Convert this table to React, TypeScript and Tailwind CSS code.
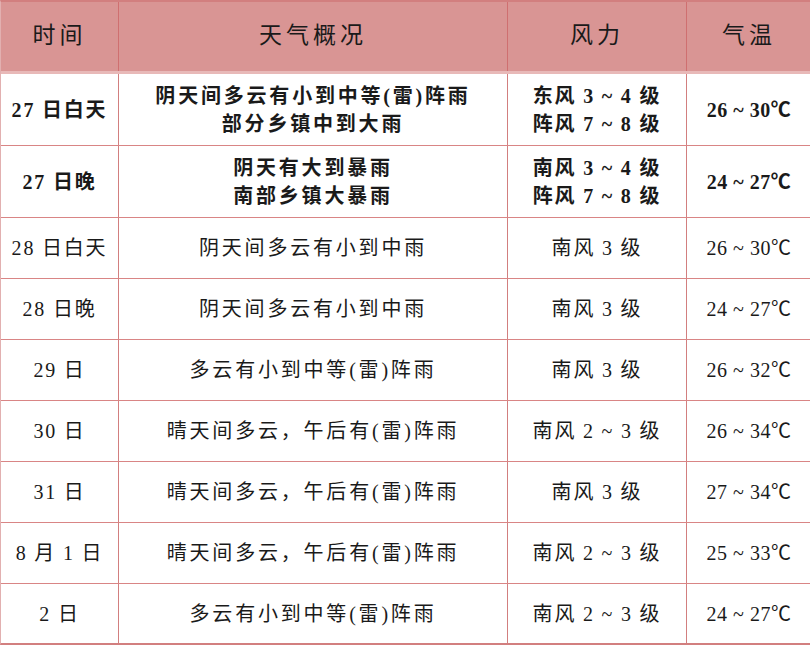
import React from "react";

// One forecast row in the weather table
interface ForecastRow {
  time: string;
  sky: string[];
  wind: string[];
  temp: string;
  bold?: boolean;
  tall?: boolean;
}

const rows: ForecastRow[] = [
  { time: "27 日白天", sky: ["阴天间多云有小到中等(雷)阵雨", "部分乡镇中到大雨"], wind: ["东风 3 ~ 4 级", "阵风 7 ~ 8 级"], temp: "26 ~ 30℃", bold: true, tall: true },
  { time: "27 日晚", sky: ["阴天有大到暴雨", "南部乡镇大暴雨"], wind: ["南风 3 ~ 4 级", "阵风 7 ~ 8 级"], temp: "24 ~ 27℃", bold: true, tall: true },
  { time: "28 日白天", sky: ["阴天间多云有小到中雨"], wind: ["南风 3 级"], temp: "26 ~ 30℃" },
  { time: "28 日晚", sky: ["阴天间多云有小到中雨"], wind: ["南风 3 级"], temp: "24 ~ 27℃" },
  { time: "29 日", sky: ["多云有小到中等(雷)阵雨"], wind: ["南风 3 级"], temp: "26 ~ 32℃" },
  { time: "30 日", sky: ["晴天间多云，午后有(雷)阵雨"], wind: ["南风 2 ~ 3 级"], temp: "26 ~ 34℃" },
  { time: "31 日", sky: ["晴天间多云，午后有(雷)阵雨"], wind: ["南风 3 级"], temp: "27 ~ 34℃" },
  { time: "8 月 1 日", sky: ["晴天间多云，午后有(雷)阵雨"], wind: ["南风 2 ~ 3 级"], temp: "25 ~ 33℃" },
  { time: "2 日", sky: ["多云有小到中等(雷)阵雨"], wind: ["南风 2 ~ 3 级"], temp: "24 ~ 27℃" },
];

const font = { fontFamily: '"Liberation Serif", "Noto Sans CJK SC", serif' };

export default function App() {
  return (
    <div className="w-[810px] h-[645px] bg-white overflow-hidden text-[#1a1a1a]" style={font}>
      <div className="border-l border-t-2 border-b-2 border-[#d27f7f] border-l-[#e2b0b0]">
        {/* Header */}
        <div className="grid grid-cols-[118px_389px_179px_124px] h-[72px] bg-[#d99594] border-b-[3px] border-[#e8b9b8] text-[23px] tracking-[4px]">
          <div className="flex items-center justify-center border-r border-[#cf6f70]">时间</div>
          <div className="flex items-center justify-center border-r border-[#cf6f70]">天气概况</div>
          <div className="flex items-center justify-center border-r border-[#cf6f70]">风力</div>
          <div className="flex items-center justify-center">气温</div>
        </div>

        {rows.map((row, index) => {
          const last = index === rows.length - 1;
          return (
            <div
              key={index}
              className={`grid grid-cols-[118px_389px_179px_124px] text-[20px] leading-[28px] ${
                row.tall ? "h-[72px]" : last ? "h-[59px]" : "h-[61px]"
              } ${last ? "" : "border-b border-[#d98585]"} ${row.bold ? "font-semibold" : ""}`}
            >
              <div className="flex items-center justify-center border-r border-[#d27f7f] tracking-[1.8px]">{row.time}</div>
              <div className="flex flex-col items-center justify-center border-r border-[#d27f7f] tracking-[2.8px]">
                {row.sky.map((line) => (
                  <div key={line}>{line}</div>
                ))}
              </div>
              <div className="flex flex-col items-center justify-center border-r border-[#d27f7f] tracking-[1.8px]">
                {row.wind.map((line) => (
                  <div key={line}>{line}</div>
                ))}
              </div>
              <div className="flex items-center justify-center tracking-[0.5px]">{row.temp}</div>
            </div>
          );
        })}
      </div>
    </div>
  );
}
